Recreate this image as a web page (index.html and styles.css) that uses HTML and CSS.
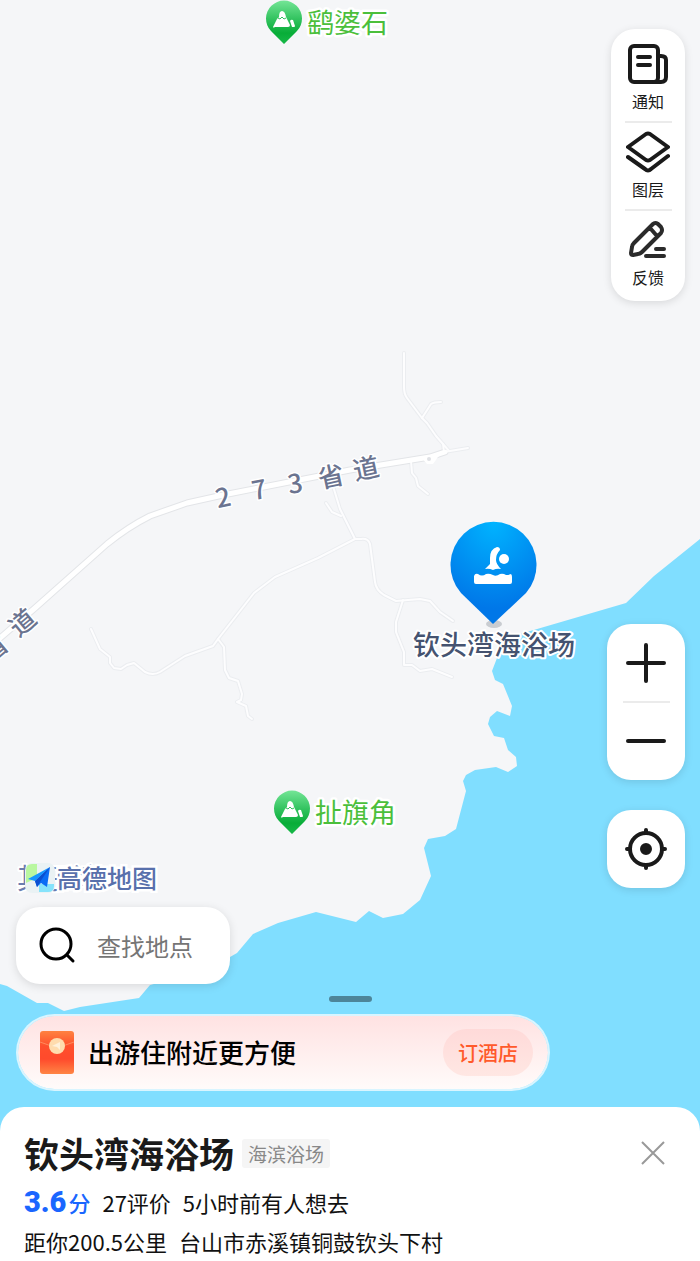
FILE: index.html
```html
<!DOCTYPE html>
<html lang="zh-CN">
<head>
  <meta charset="UTF-8">
  <meta name="viewport" content="width=device-width, initial-scale=1">
  <title>钦头湾海浴场</title>
  <link rel="stylesheet" href="styles.css">
</head>
<body>

  <main class="page">

    <!-- Map canvas -->
    <svg class="map" viewBox="0 0 700 1261" preserveAspectRatio="xMidYMid slice">
      <defs>
        <linearGradient id="pin-green" x1="0" y1="0" x2="0" y2="1">
          <stop offset="0" stop-color="#74e596"/>
          <stop offset="0.45" stop-color="#2fc15c"/>
          <stop offset="0.75" stop-color="#08ad38"/>
          <stop offset="1" stop-color="#17b848"/>
        </linearGradient>
        <radialGradient id="pin-blue" cx="0.5" cy="0" r="0.85">
          <stop offset="0" stop-color="#00b4ff"/>
          <stop offset="1" stop-color="#0077e8"/>
        </radialGradient>
        <g id="roads-minor">
          <path d="M404 353V387Q404 394 407 398L422 418L427 423L436 436L443 444L449 451"/>
          <path d="M422 418L431 404Q434 402 441 402"/>
          <path d="M443 444L444 452L468 448"/>
          <path d="M411 461L412 473L416 478L418 486L428 494"/>
          <path d="M333 486L340 509L355 539L318 558L275 577L254 593L218 639L213 646L185 656L160 672Q153 676 145 672L134 663L127 665L121 669L114 668L110 663V657L100 649L91 629"/>
          <path d="M326 503L332 512L341 516"/>
          <path d="M218 639L224 647L225 670L229 678L238 681L242 694L241 700L237 702L246 706L248 716L252 719"/>
          <path d="M355 539L361 539Q368 538 370 544L375 582Q376 590 384 595L396 601L420 599L430 601L440 612L453 621"/>
          <path d="M403 600L396 622V632L404 652V665L412 665L420 671L432 669L452 677"/>
        </g>
        <path id="road-main" d="M-20 657L0 638L35 608L107 544Q128 527 150 516L187 503L223 495L350 470L430 457L445 452"/>
        <g id="pin-scenic">
          <path d="M0 21L-13 8A18 18 0 1 1 13 8Z" fill="url(#pin-green)"/>
          <path d="M-11 4L-7 -4L-5 -6Q-5 -12 -2 -12Q1 -12 2 -6L6 2Q6 4 4 4H-9Q-11 5 -11 4ZM6 -2Q7 -4 9 -3L11 3Q11 4 10 4H8Z" fill="#fff"/>
          <path d="M-6 -5L-4 -4L-2 -6L0 -4L2 -5" fill="none" stroke="#2fc15c" stroke-width="1"/>
        </g>
      </defs>

      <rect x="-700" width="2100" height="1261" fill="#f5f6f8"/>
      <path class="sea" d="M1400 0V1261H-700V984H0L7 986L37 1003H48L64 1011L80 1007L139 998L150 985L200 972L230 957L237 953L253 934L278 923L316 912L356 922L369 911L383 918L403 914L420 900L431 876L424 848L428 839L445 836L456 829L466 791L463 781L466 775L475 770L496 767L508 772L517 766L516 757L508 750L504 738L494 736L488 724L490 717L497 711L510 716L512 706L503 684L495 680L492 671L497 658L505 644L520 634L626 603L654 576L700 539Z"/>

      <use href="#roads-minor" class="road-minor-edge"/>
      <use href="#road-main" class="road-main-edge"/>
      <use href="#roads-minor" class="road-minor"/>
      <use href="#road-main" class="road-main"/>
      <path d="M421 457L443 452L438 457L433 464H427Z" fill="#fff"/>
      <circle cx="429" cy="459" r="2" fill="#dfe1e5"/>

      <g class="road-name">
        <text transform="translate(223 497) rotate(-12)" y="10">2</text>
        <text transform="translate(259 489) rotate(-10)" y="10">7</text>
        <text transform="translate(295 483) rotate(-9)" y="10">3</text>
        <text transform="translate(331 476) rotate(-12)" y="10">省</text>
        <text transform="translate(366 468) rotate(-12)" y="10">道</text>
        <text transform="translate(-6 648) rotate(-40)" y="10">省</text>
        <text transform="translate(22 622) rotate(-40)" y="10">道</text>
      </g>
      <text class="place-name" x="17" y="889">其子湾</text>

      <use href="#pin-scenic" x="284" y="23"/>
      <text class="scenic-name" x="307" y="33">鹞婆石</text>
      <use href="#pin-scenic" x="292" y="813"/>
      <text class="scenic-name" x="315" y="823">扯旗角</text>

      <!-- Selected place -->
      <ellipse cx="494" cy="624" rx="8" ry="4" fill="#c9ccd1"/>
      <path d="M493 624L461 593A43 43 0 1 1 526 593Z" fill="url(#pin-blue)"/>
      <g fill="#fff">
        <circle cx="504" cy="559" r="5"/>
        <path d="M485 569L490 564V558Q490 549 497 547Q500 547 500 550Q496 554 496 560Q496 564 501 569Q497 568 493 570Q489 568 485 569Z"/>
        <path d="M474 576Q475 573 478 574Q482 577 486 574Q489 573 493 575Q496 577 500 574Q503 573 506 575Q509 575 511 574Q512 575 512 577V582Q512 584 510 584H476Q474 584 474 582Z"/>
      </g>
      <text class="selected-name" x="413" y="655">钦头湾海浴场</text>
    </svg>

    <!-- Controls over the map -->
    <div class="overlay">
      <div class="panel tools">
        <button class="tool">
          <svg width="44" height="44" viewBox="0 0 44 44" class="icon">
            <rect x="4" y="4" width="28" height="36" rx="4"/>
            <path d="M32 14H35Q40 14 40 18V35Q40 40 35 40H28M32 14V31M12 15H24M12 23H24"/>
          </svg>
          <span>通知</span>
        </button>
        <button class="tool">
          <svg width="44" height="44" viewBox="0 0 44 44" class="icon">
            <path d="M20 4Q22 3 24 4L42 17L24 30Q22 31 20 30L2 17Z"/>
            <path d="M2 27L19 39Q22 42 25 39L42 26"/>
          </svg>
          <span>图层</span>
        </button>
        <button class="tool">
          <svg width="44" height="44" viewBox="0 0 44 44" class="icon pencil">
            <path d="M7 37Q5 37 5 35L6 29Q6 27 8 25L27 6Q29 4 32 6L35 9Q37 12 35 15L16 34Q14 36 12 36ZM24 10L31 18M30 31H38M20 38H38"/>
          </svg>
          <span>反馈</span>
        </button>
      </div>

      <div class="lower">
        <div class="lower-left">
          <div class="brand">
            <svg width="32" height="30" viewBox="0 0 32 30">
              <rect width="30" height="30" rx="7" fill="#eaf2f4"/>
              <path d="M7 1H12V15L1 20V7Q1 1 7 1Z" fill="#b9f7a0"/>
              <path d="M14 21H29V23Q29 29 23 29H14Z" fill="#86e3fb"/>
              <path d="M25 4L3 16L10 18Z" fill="#1496ff"/>
              <path d="M25 4L10 18L12 24L16 20L22 24Z" fill="#0a6cf5"/>
              <path d="M25 4L10 18L12 24L15 19Z" fill="#0a4fd0"/>
            </svg>
            <span>高德地图</span>
          </div>
          <label class="search">
            <svg width="40" height="40" viewBox="0 0 40 40" class="search-icon">
              <circle cx="18" cy="18" r="15"/>
              <path d="M29 29L35 35"/>
            </svg>
            <input type="text" placeholder="查找地点" aria-label="查找地点">
          </label>
        </div>

        <div class="lower-right">
          <div class="panel zoom">
            <button aria-label="放大">
              <svg width="44" height="44" viewBox="0 0 44 44" class="icon"><path d="M4 22H40M22 4V40"/></svg>
            </button>
            <button aria-label="缩小">
              <svg width="44" height="44" viewBox="0 0 44 44" class="icon"><path d="M4 22H40"/></svg>
            </button>
          </div>
          <div class="panel zoom">
            <button aria-label="定位">
              <svg width="44" height="44" viewBox="0 0 44 44" class="icon">
                <circle cx="22" cy="22" r="16"/>
                <circle cx="22" cy="22" r="4"/>
                <circle cx="22" cy="22" r="2"/>
                <path d="M22 3V6M22 38V41M3 22H6M38 22H41"/>
              </svg>
            </button>
          </div>
        </div>
      </div>

      <div class="handle"></div>

      <div class="banner">
        <svg width="34" height="44" viewBox="0 0 34 44">
          <defs>
            <linearGradient id="packet" x1="0" y1="0" x2="0" y2="1">
              <stop offset="0" stop-color="#ff8240"/>
              <stop offset="0.35" stop-color="#ff4f2c"/>
              <stop offset="0.65" stop-color="#ff4a2c"/>
              <stop offset="1" stop-color="#ff8544"/>
            </linearGradient>
          </defs>
          <rect width="34" height="43" rx="3" fill="url(#packet)"/>
          <path d="M0 11Q17 19 34 11" fill="none" stroke="#ff8a5c" stroke-width="1"/>
          <circle cx="17" cy="15" r="8" fill="#ffdcae"/>
          <path d="M12 15L20 11V19L17 16Z" fill="#fff1da"/>
        </svg>
        <span class="banner-text">出游住附近更方便</span>
        <button class="book">订酒店</button>
      </div>
    </div>

    <!-- Place card -->
    <section class="sheet">
      <div class="title-row">
        <h1>钦头湾海浴场</h1>
        <span class="tag">海滨浴场</span>
        <button class="close" aria-label="关闭">
          <svg width="24" height="24" viewBox="0 0 24 24"><path d="M1 1L23 23M23 1L1 23"/></svg>
        </button>
      </div>
      <div class="info-row">
        <span class="score"><b>3.6</b>分</span>
        <span>27评价</span>
        <span>5小时前有人想去</span>
      </div>
      <div class="info-row">
        <span>距你200.5公里</span>
        <span>台山市赤溪镇铜鼓钦头下村</span>
      </div>
    </section>

  </main>

</body>
</html>
```

FILE: styles.css
```css
* {
  box-sizing: border-box;
}
body {
  margin: 0;
  font-family: "Noto Sans CJK SC", sans-serif;
  color: #1a1a1a;
}
button {
  margin: 0;
  padding: 0;
  border: none;
  background: none;
  font-family: inherit;
  color: inherit;
  cursor: pointer;
}
.page {
  position: relative;
  display: flex;
  flex-direction: column;
  min-height: 100vh;
  overflow: hidden;
}

/* Map */
.map {
  position: absolute;
  top: 0;
  left: 0;
  width: 100%;
  height: 100%;
}
.sea {
  fill: #80deff;
}
.road-minor-edge,
.road-main-edge,
.road-minor,
.road-main {
  fill: none;
  stroke-linejoin: round;
  stroke-linecap: round;
}
.road-minor-edge {
  stroke: #ebedf0;
  stroke-width: 4px;
}
.road-minor {
  stroke: #fdfdfe;
  stroke-width: 2px;
}
.road-main-edge {
  stroke: #e3e5e8;
  stroke-width: 7px;
}
.road-main {
  stroke: #fff;
  stroke-width: 5px;
}
.map text {
  paint-order: stroke;
  stroke: #fff;
  stroke-linejoin: round;
}
.road-name text {
  font-size: 26px;
  font-weight: 500;
  fill: #6b7490;
  stroke-width: 3px;
  text-anchor: middle;
}
.place-name {
  font-size: 28px;
  fill: #6b7db0;
  stroke-width: 4px;
}
.scenic-name {
  font-size: 27px;
  fill: #4bbf3b;
  stroke-width: 5px;
}
.selected-name {
  font-size: 27px;
  font-weight: 500;
  fill: #455370;
  stroke-width: 4px;
}

/* Controls */
.overlay {
  position: relative;
  flex: 1;
  display: flex;
  flex-direction: column;
  padding: 29px 15px 16px 16px;
}
.panel {
  display: flex;
  flex-direction: column;
  border-radius: 24px;
  background: #fff;
  box-shadow: 0 2px 8px rgba(0, 0, 0, 0.12);
}
.panel button {
  display: flex;
  flex-direction: column;
  align-items: center;
  position: relative;
}
.panel button + button::before {
  content: "";
  position: absolute;
  top: -1px;
  width: 47px;
  height: 2px;
  background: #ebebeb;
}
.icon {
  fill: none;
  stroke: #1a1a1a;
  stroke-width: 4px;
  stroke-linecap: round;
  stroke-linejoin: round;
}
.pencil {
  stroke: #2b2b2b;
}
.tools {
  align-self: flex-end;
  width: 74px;
  padding: 5px 0 3px;
}
.tools .tool {
  gap: 5px;
  padding: 8px 0 11px;
  font-size: 16px;
  line-height: 20px;
}
.lower {
  display: flex;
  justify-content: space-between;
  align-items: flex-end;
  margin-top: auto;
}
.lower-left {
  display: flex;
  flex-direction: column;
  gap: 14px;
}
.lower-right {
  display: flex;
  flex-direction: column;
  gap: 30px;
  width: 78px;
  margin-bottom: 96px;
}
.zoom button {
  justify-content: center;
  height: 78px;
}
.brand {
  display: flex;
  align-items: center;
  padding-left: 9px;
  height: 30px;
  font-size: 25px;
  line-height: 26px;
  font-weight: 500;
  color: #5870ac;
  -webkit-text-stroke: 5px #fff;
  paint-order: stroke;
}
.brand span {
  padding-bottom: 3px;
}
.search {
  display: flex;
  align-items: center;
  gap: 19px;
  width: 214px;
  height: 77px;
  padding: 0 22px;
  border-radius: 24px;
  background: #fff;
  box-shadow: 0 2px 10px rgba(0, 0, 0, 0.12);
}
.search-icon {
  flex: none;
  fill: none;
  stroke: #000;
  stroke-width: 3px;
  stroke-linecap: round;
}
.search input {
  flex: 1;
  min-width: 0;
  padding: 0;
  border: none;
  outline: none;
  background: none;
  font-family: inherit;
  font-size: 24px;
}
.search input::placeholder {
  color: #757575;
}
.handle {
  align-self: center;
  width: 43px;
  height: 6px;
  margin: 12px 0;
  border-radius: 3px;
  background: #4d8599;
}
.banner {
  display: flex;
  align-items: center;
  gap: 14px;
  width: 100%;
  max-width: 534px;
  height: 77px;
  padding: 0 15px 0 22px;
  border: 2px solid rgba(255, 255, 255, 0.7);
  border-radius: 39px;
  background: linear-gradient(#ffe2e2, #fffbfa) padding-box;
}
.banner-text {
  padding-bottom: 2px;
  font-size: 26px;
  font-weight: 500;
  color: #000;
}
.banner .book {
  margin-left: auto;
  height: 47px;
  padding: 0 15px 1px;
  border-radius: 24px;
  background: linear-gradient(#ffdad9, #ffe7e3);
  font-size: 20px;
  font-weight: 500;
  color: #ff5a2b;
}

/* Place card */
.sheet {
  position: relative;
  display: flex;
  flex-direction: column;
  gap: 7px;
  padding: 26px 24px 4px;
  border-radius: 24px 24px 0 0;
  background: #fff;
}
.title-row {
  display: flex;
  align-items: center;
  gap: 8px;
  height: 40px;
  margin-bottom: 6px;
}
h1 {
  margin: 0;
  font-size: 35px;
  line-height: 40px;
  font-weight: 700;
}
.tag {
  padding: 0 6px;
  border-radius: 3px;
  background: #f5f5f5;
  font-size: 19px;
  line-height: 29px;
  color: #888;
}
.close {
  display: flex;
  margin-left: auto;
  padding: 0 11px;
}
.close svg {
  fill: none;
  stroke: #999;
  stroke-width: 2px;
}
.info-row {
  display: flex;
  align-items: center;
  gap: 12px;
  font-size: 22px;
  line-height: 32px;
  color: #111;
}
.score {
  display: flex;
  align-items: center;
  gap: 2px;
  font-weight: 500;
  color: #1a66ff;
}
.score b {
  font-family: Roboto, sans-serif;
  font-size: 29px;
  font-weight: 900;
}
```
